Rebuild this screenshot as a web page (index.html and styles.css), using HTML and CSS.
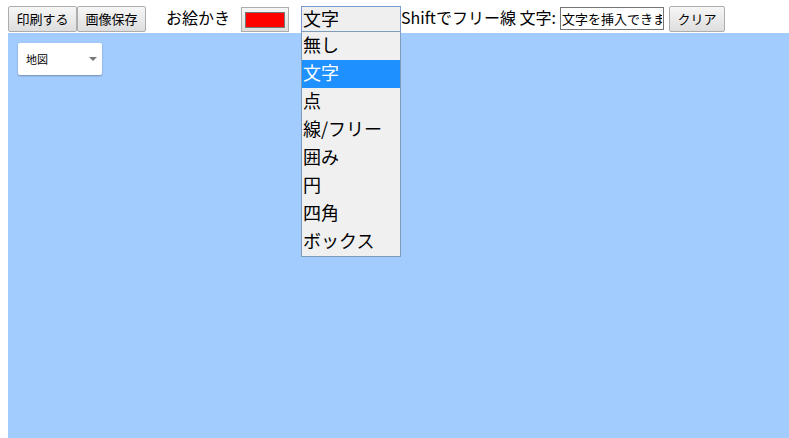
FILE: index.html
```html
<!DOCTYPE html>
<html lang="ja">
<head>
<meta charset="utf-8">
<link rel="stylesheet" href="styles.css">
</head>
<body>
<div class="toolbar">
  <button class="btn btn-print">印刷する</button>
  <button class="btn btn-save">画像保存</button>
  <span class="label draw-label">お絵かき</span>
  <span class="color-btn"><span class="swatch"></span></span>
  <span class="select-wrap">
    <span class="select">文字</span>
    <ul class="options">
      <li>無し</li>
      <li class="selected">文字</li>
      <li>点</li>
      <li>線/フリー</li>
      <li>囲み</li>
      <li>円</li>
      <li>四角</li>
      <li>ボックス</li>
    </ul>
  </span>
  <span class="label shift-label">Shiftでフリー線 文字:</span>
  <input class="text-input" type="text" value="文字を挿入できます">
  <button class="btn btn-clear">クリア</button>
</div>
<div class="map">
  <div class="map-type">
    <span class="map-type-text">地図</span>
    <svg class="caret" width="8" height="4" viewBox="0 0 8 4"><path d="M0 0h8L4 4z" fill="#777"/></svg>
  </div>
</div>
</body>
</html>
```
FILE: styles.css
```css
html, body {
  margin: 0;
  padding: 0;
  overflow: hidden;
  background: #fff;
}
body {
  width: 789px;
  height: 438px;
  font-family: "Noto Sans CJK JP", "Noto Sans", sans-serif;
  color: #000;
}
.toolbar {
  height: 33px;
  padding-left: 8px;
  display: flex;
  align-items: flex-start;
  box-sizing: border-box;
  position: relative;
  z-index: 2;
}
.btn {
  font-family: "Noto Sans CJK JP", sans-serif;
  font-size: 13px;
  height: 26px;
  margin-top: 6px;
  padding: 0 6px;
  border: 1px solid #adadad;
  border-radius: 2px;
  background: linear-gradient(#f6f6f6, #dedede);
  color: #000;
  line-height: 22px;
}
.btn-print { width: 69px; }
.btn-save { width: 69px; }
.btn-clear { width: 56px; margin-left: 5px; }
.label {
  font-size: 16px;
  line-height: 20px;
  margin-top: 7px;
  white-space: nowrap;
}
.draw-label { margin-left: 20px; }
.color-btn {
  margin-left: 11px;
  margin-top: 7px;
  width: 48px;
  height: 25px;
  box-sizing: border-box;
  border: 1px solid #adadad;
  background: linear-gradient(#f6f6f6, #dedede);
  display: flex;
  align-items: center;
  justify-content: center;
}
.swatch {
  width: 38px;
  height: 14px;
  background: #ff0000;
  border: 1px solid #777;
}
.select-wrap {
  position: relative;
  margin-left: 12px;
  margin-top: 6px;
  width: 100px;
}
.select {
  display: block;
  box-sizing: border-box;
  width: 100px;
  height: 26px;
  border: 1px solid #7a9cd3;
  background: #efefef;
  font-size: 18px;
  line-height: 23px;
  padding-left: 1px;
}
.options {
  position: absolute;
  left: 0;
  top: 25px;
  width: 100px;
  box-sizing: border-box;
  margin: 0;
  padding: 0;
  list-style: none;
  border: 1px solid #7f9db9;
  background: #f0f0f0;
}
.options li {
  height: 28px;
  box-sizing: border-box;
  font-size: 18px;
  line-height: 24px;
  padding: 0 0 4px 1px;
  white-space: nowrap;
}
.options li.selected {
  background: #1e90ff;
  color: #fff;
}
.shift-label { margin-left: 0; }
.text-input {
  margin-top: 7px;
  margin-left: 4px;
  width: 104px;
  height: 23px;
  box-sizing: border-box;
  border: 1px solid #767676;
  padding: 0 1px;
  font-family: "Noto Sans CJK JP", sans-serif;
  font-size: 13px;
}
.map {
  margin-left: 8px;
  height: 405px;
  background: #a3ccfe;
  position: relative;
  padding: 10px;
  box-sizing: border-box;
}
.map-type {
  width: 84px;
  height: 32px;
  background: #fff;
  border-radius: 2px;
  box-shadow: 0 1px 2px rgba(0,0,0,0.3);
  display: flex;
  align-items: center;
  justify-content: space-between;
  padding: 0 5px 0 8px;
  box-sizing: border-box;
}
.map-type-text { font-size: 11px; }
.caret { display: block; }
```
